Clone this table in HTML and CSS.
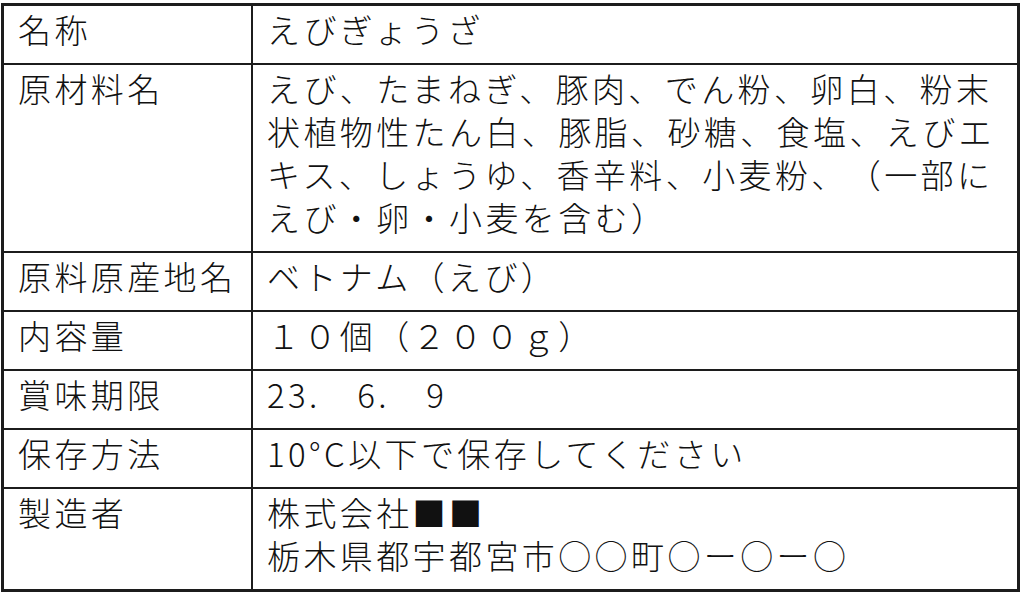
FILE: index.html
```html
<!DOCTYPE html>
<html lang="ja">
<head>
<meta charset="utf-8">
<title>えびぎょうざ 表示</title>
<link rel="stylesheet" href="styles.css">
</head>
<body>
<table class="label-table">
  <tbody>
    <tr>
      <th class="key">名称</th>
      <td class="val">えびぎょうざ</td>
    </tr>
    <tr>
      <th class="key">原材料名</th>
      <td class="val">えび、たまねぎ、豚肉、でん粉、卵白、粉末<br>状植物性たん白、豚脂、砂糖、食塩、えびエ<br>キス、しょうゆ、香辛料、小麦粉、（一部に<br>えび・卵・小麦を含む）</td>
    </tr>
    <tr>
      <th class="key">原料原産地名</th>
      <td class="val">ベトナム（えび）</td>
    </tr>
    <tr>
      <th class="key">内容量</th>
      <td class="val">１０個（２００ｇ）</td>
    </tr>
    <tr>
      <th class="key">賞味期限</th>
      <td class="val">23.　6.　9</td>
    </tr>
    <tr>
      <th class="key">保存方法</th>
      <td class="val">10°C以下で保存してください</td>
    </tr>
    <tr>
      <th class="key">製造者</th>
      <td class="val">株式会社■■<br>栃木県都宇都宮市○○町○ー○ー○</td>
    </tr>
  </tbody>
</table>
</body>
</html>
```

FILE: styles.css
```css
html, body {
  margin: 0;
  padding: 0;
  background: #ffffff;
}

body {
  font-family: "Noto Sans CJK JP", "Noto Sans", sans-serif;
  color: #111111;
}

.label-table {
  border-collapse: collapse;
  margin: 3px 0 0 1px;
  width: 1019px;
  border: 3px solid #1c1c1c;
}

.key,
.val {
  border: 2px solid #1c1c1c;
  padding: 2px 10px 12px 14px;
  vertical-align: top;
  text-align: left;
  font-size: 33px;
  line-height: 43px;
  letter-spacing: 3.4px;
  font-weight: 300;
  white-space: nowrap;
  text-spacing-trim: space-all;
}

.key {
  width: 223px;
}
```
